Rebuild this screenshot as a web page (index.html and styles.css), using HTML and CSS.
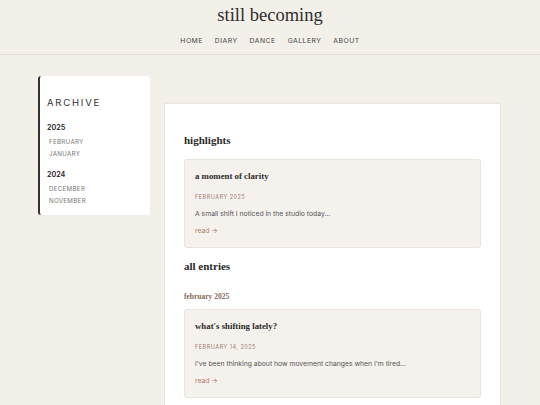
FILE: index.html
```html
<!DOCTYPE html>
<html lang="en">
<head>
    <meta charset="UTF-8">
    <meta name="viewport" content="width=device-width, initial-scale=1.0">
    <title>still becoming</title>
    <link rel="stylesheet" href="styles.css">
</head>
<body>
    <header class="site-header">
        <h1 class="site-title">still becoming</h1>
        <nav class="site-nav">
            <a href="#">Home</a>
            <a href="#">Diary</a>
            <a href="#">Dance</a>
            <a href="#">Gallery</a>
            <a href="#">About</a>
        </nav>
    </header>

    <div class="layout">
        <aside class="archive">
            <h2 class="archive-title">Archive</h2>
            <div class="archive-year">
                <h3>2025</h3>
                <a href="#">February</a>
                <a href="#">January</a>
            </div>
            <div class="archive-year">
                <h3>2024</h3>
                <a href="#">December</a>
                <a href="#">November</a>
            </div>
        </aside>

        <main class="content">
            <h2 class="section-title">highlights</h2>
            <article class="entry">
                <h3 class="entry-title">a moment of clarity</h3>
                <p class="entry-date">February 2025</p>
                <p class="entry-excerpt">A small shift I noticed in the studio today...</p>
                <a class="entry-link" href="#">read &rarr;</a>
            </article>

            <h2 class="section-title all">all entries</h2>
            <h4 class="month-label">february 2025</h4>
            <article class="entry">
                <h3 class="entry-title">what's shifting lately?</h3>
                <p class="entry-date">February 14, 2025</p>
                <p class="entry-excerpt">I've been thinking about how movement changes when I'm tired...</p>
                <a class="entry-link" href="#">read &rarr;</a>
            </article>
        </main>
    </div>
</body>
</html>
```

FILE: styles.css
```css
body {
    margin: 0;
    padding: 0;
    background-color: #f3f0e9;
    font-family: Inter, "Liberation Sans", sans-serif;
    color: #333;
}

a {
    text-decoration: none;
}

.site-header {
    height: 55px;
    box-sizing: border-box;
    border-bottom: 1px solid #e3dfd6;
    text-align: center;
    padding-top: 3px;
}

.site-title {
    margin: 0;
    font-family: "Liberation Serif", serif;
    font-weight: normal;
    font-size: 18.5px;
    line-height: 24px;
    color: #2e2e2e;
}

.site-nav {
    display: flex;
    justify-content: center;
    gap: 12px;
    margin-top: 9px;
}

.site-nav a {
    font-size: 6.8px;
    line-height: 10px;
    letter-spacing: 0.5px;
    text-transform: uppercase;
    color: #444;
}

.layout {
    display: flex;
    align-items: flex-start;
    gap: 14px;
    padding: 21px 39px 0 38px;
}

.archive {
    width: 112px;
    flex-shrink: 0;
    box-sizing: border-box;
    background: #ffffff;
    border-left: 2px solid #333;
    border-radius: 3px;
    padding: 20px 8px 8px 7px;
}

.archive-title {
    margin: 0;
    font-size: 9.5px;
    line-height: 14px;
    font-weight: normal;
    letter-spacing: 1.8px;
    text-transform: uppercase;
    color: #333;
}

.archive-year {
    margin-top: 13px;
}

.archive-year + .archive-year {
    margin-top: 10px;
}

.archive-year h3 {
    margin: 0 0 3px;
    font-size: 7.2px;
    line-height: 10px;
    font-weight: 600;
    color: #222;
}

.archive-year a {
    display: block;
    padding-left: 2px;
    font-size: 6.2px;
    line-height: 12px;
    letter-spacing: 0.3px;
    text-transform: uppercase;
    color: #777;
}

.content {
    flex: 1;
    margin-top: 27px;
    background: #ffffff;
    border: 1px solid #ebe7df;
    padding: 28px 19px 20px;
    min-height: 400px;
}

.section-title {
    margin: 0 0 11px;
    font-family: "Liberation Serif", serif;
    font-size: 11px;
    line-height: 16px;
    font-weight: bold;
    color: #2a2a2a;
}

.section-title.all {
    margin-top: 10px;
    margin-bottom: 18px;
}

.month-label {
    margin: 0 0 7px;
    font-family: "Liberation Serif", serif;
    font-size: 7.5px;
    line-height: 10px;
    font-weight: bold;
    color: #8a6a5c;
}

.entry {
    background: #f5f2ed;
    border: 1px solid #e9e4dc;
    border-radius: 3px;
    padding: 10px 10px 11px;
}

.entry-title {
    margin: 0;
    font-family: "Liberation Serif", serif;
    font-size: 8.8px;
    line-height: 12px;
    font-weight: bold;
    color: #2a2a2a;
}

.entry-date {
    margin: 11px 0 0;
    font-size: 5.5px;
    line-height: 8px;
    letter-spacing: 0.5px;
    text-transform: uppercase;
    color: #a47d70;
}

.entry-excerpt {
    margin: 8px 0 0;
    font-size: 6.8px;
    line-height: 10px;
    color: #555;
}

.entry-link {
    display: block;
    margin-top: 7px;
    font-size: 6.8px;
    line-height: 10px;
    color: #b27c6c;
}
```
